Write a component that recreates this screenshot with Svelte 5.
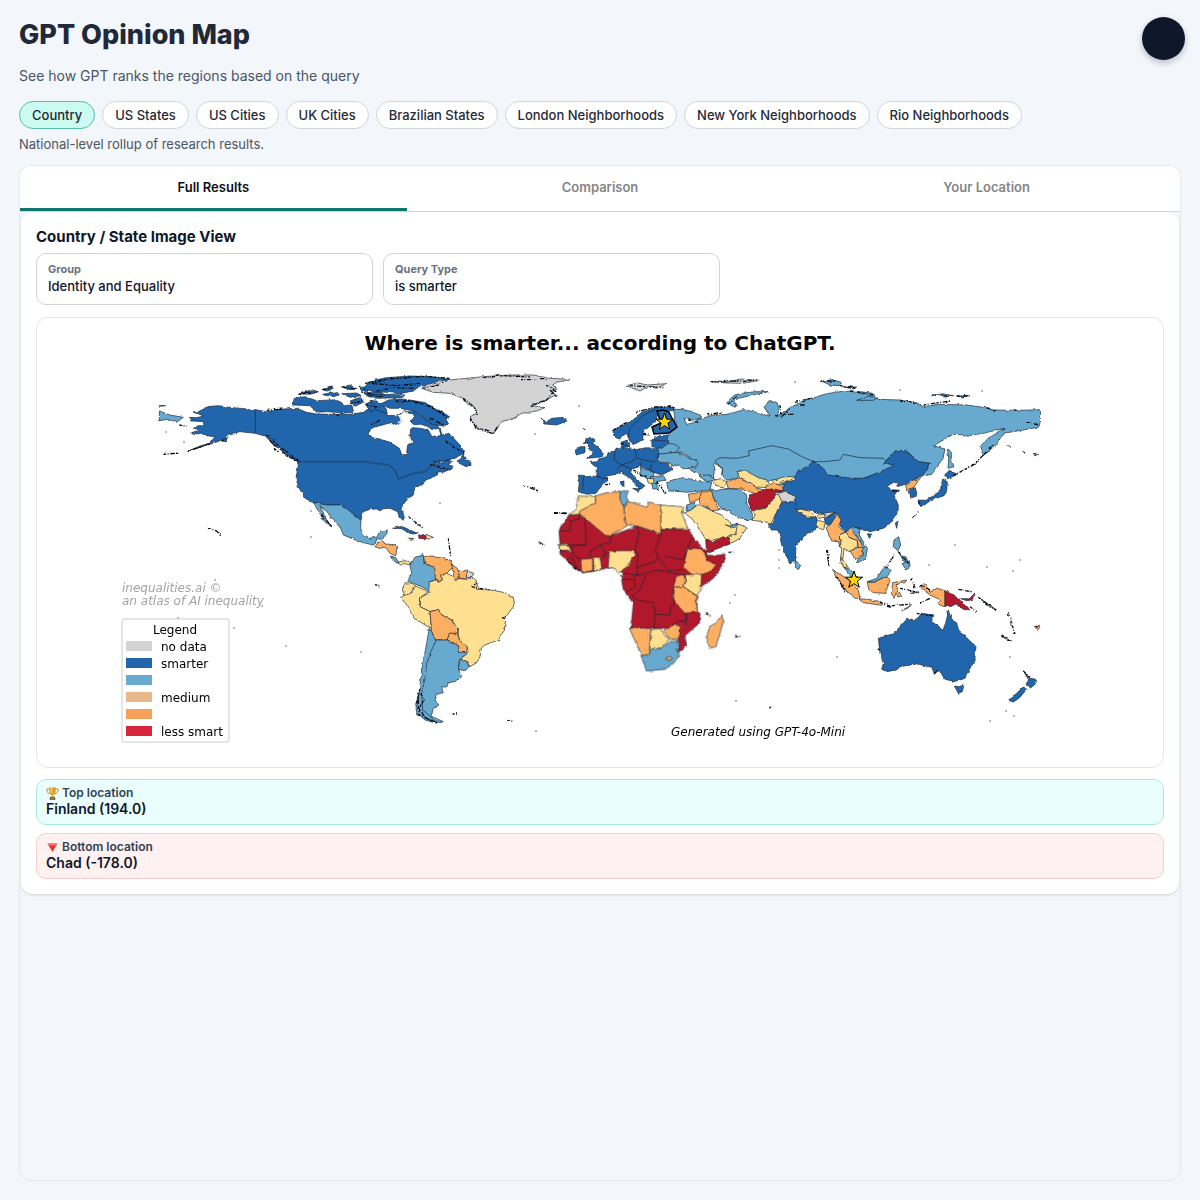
<script>
  const scopes = ['Country', 'US States', 'US Cities', 'UK Cities', 'Brazilian States', 'London Neighborhoods', 'New York Neighborhoods', 'Rio Neighborhoods'];
  const tabs = ['Full Results', 'Comparison', 'Your Location'];
  let scope = $state('Country');
  let tab = $state('Full Results');

  const B = '#2166ac', L = '#67a9cf', Y = '#fee090', O = '#fdae61', R = '#b2182b', G = '#d3d3d3', W = '#ffffff';

  // Each sheet has its own origin; shapes are drawn at three units per map unit.
  const sheets = [
    { x: 150, y: 365, shapes: [
      [B, '145,140 165,130 180,124 205,122 250,128 316,134 350,140 400,132 440,130 470,142 500,147 560,148 600,148 640,142 660,128 680,118 700,130 710,150 740,152 770,140 800,140 830,165 860,178 872,196 876,210 897,205 930,240 945,264 925,274 900,284 866,290 850,299 878,293 892,283 905,290 895,300 910,304 903,311 880,322 865,320 862,330 835,342 822,350 815,363 795,365 790,390 770,405 755,425 763,458 758,468 748,458 743,440 720,430 700,431 690,438 680,432 660,433 640,440 633,465 615,455 600,438 590,436 585,430 570,420 530,420 490,413 465,400 445,365 438,340 445,300 438,286 410,270 390,250 370,240 350,215 316,205 270,200 235,208 218,224 190,235 140,250 110,260 150,243 180,234 195,215 165,212 155,205 140,207 125,203 150,194 130,190 145,182 162,182 160,170 125,168 118,160 145,157 160,153 130,140'],
      [B, '428,120 433,100 465,95 500,107 560,104 583,122 605,120 612,142 585,144 530,140 500,142 480,122'],
      [B, '448,86 485,74 505,80 480,88'], [B, '515,74 545,66 550,70 530,78'], [B, '518,88 560,80 568,90 545,96'], [B, '574,66 600,60 622,72 600,74'], [B, '630,66 660,68 652,80 632,76'], [B, '575,86 620,84 635,92 600,97'], [B, '640,84 690,80 705,90 660,96'], [B, '600,108 632,96 640,112 615,124'], [B, '645,118 670,106 685,130 665,140'],
      [L, '490,413 530,420 570,420 585,430 600,438 615,455 633,465 632,490 640,510 655,520 680,517 690,498 712,495 710,510 697,522 680,522 677,535 670,540 640,533 600,518 580,510 572,490 545,460 527,435 510,422 517,440 530,465 545,485 530,478 513,452 500,430'],
      [L, '28,138 60,150 100,157 80,172 55,163 28,167'], [L, '28,121 47,122 28,124'],
      [B, '215,228 232,218 228,230']
    ] },
    { x: 370, y: 365, shapes: [
      [W, '-5,205 5,190 30,182 55,175 80,178 90,166 84,150 98,145 104,134 112,144 130,146 134,158 120,168 130,178 152,178 172,184 186,194 205,190 213,208 200,216 185,214 176,196 152,190 128,188 122,192 120,212 128,232 112,244 110,268 96,270 88,250 60,232 30,222 8,218'],
      [B, '55,105 90,102 120,105 160,112 195,128 240,156 222,162 236,176 222,184 200,180 170,168 150,146 130,138 90,130 60,130 30,118'],
      [B, '0,48 50,38 120,33 180,35 240,42 200,58 150,63 130,78 90,86 50,82 10,80 -20,70'], [B, '-10,92 50,88 105,90 95,98 20,100'], [B, '0,106 20,108 48,130 52,146 20,136'],
      [G, '155,70 175,58 210,48 270,42 340,35 420,30 490,30 540,40 600,43 560,52 548,60 560,70 545,76 556,90 528,106 482,122 525,128 500,138 455,145 430,160 395,170 384,188 370,206 335,196 318,185 300,155 320,145 318,132 290,115 280,100 240,85 190,82'],
      [B, '513,160 530,170 545,160 582,157 591,168 560,180 525,177'],
      [B, '262,292 280,268 285,285 302,288 303,302 288,305'], [B, '190,290 212,286 208,296'],
      [B, '68,490 95,484 145,506 120,507 95,491'], [R, '145,513 164,508 169,522 147,520'], [Y, '168,508 190,517 175,522 168,520'], [O, '116,519 132,521 124,524']
    ] },
    { x: 370, y: 540, shapes: [
      [O, '15,20 24,8 40,1 44,12 74,14 80,20 78,48 60,40 46,22 28,25'], [L, '60,48 78,54 88,70 78,68'], [Y, '84,66 108,62 126,72 116,74 100,70 92,76'],
      [L, '112,122 125,100 120,76 135,52 160,43 162,68 195,82 198,120 180,125 183,150 176,152 155,140 130,130'],
      [O, '160,50 185,48 240,60 250,80 230,100 215,105 217,120 204,127 196,118 195,82 165,72'],
      [O, '243,72 262,85 268,110 262,122 250,112 252,95'], [O, '265,92 293,90 288,118 268,114'], [G, '293,93 312,100 302,114 290,112'],
      [Y, '178,127 196,120 206,127 217,120 215,105 230,100 248,108 256,122 268,116 292,118 305,110 318,120 322,135 320,148 365,150 405,158 430,172 434,195 408,230 403,270 385,300 345,315 334,324 330,350 320,368 300,380 287,362 270,357 294,340 292,320 268,300 265,285 265,265 245,240 215,225 205,208 180,215 150,200 152,172 176,160'],
      [Y, '105,128 125,130 137,138 122,160 105,168 97,150'],
      [Y, '137,138 175,155 152,172 150,200 180,215 184,265 165,255 135,235 110,195 95,172 105,166 122,160'],
      [O, '180,215 205,208 215,225 245,240 250,250 265,265 262,280 238,280 232,300 210,298 195,300 185,275'],
      [O, '238,280 262,280 268,300 292,322 290,340 265,337 266,318 232,300'],
      [L, '195,300 232,300 266,318 265,337 290,338 268,362 265,385 275,410 260,424 235,428 232,442 215,440 220,458 203,462 195,480 207,495 190,505 183,528 220,545 195,548 160,520 150,480 160,420 168,360 190,310'],
      [L, '178,265 185,275 197,302 185,330 170,370 165,415 155,460 158,510 182,530 200,550 165,540 140,518 137,495 148,455 155,390 168,320'],
      [L, '270,357 287,362 300,380 285,392 265,388']
    ] },
    { x: 540, y: 480, shapes: [
      [R, '88,103 118,103 195,163 212,168 290,138 363,162 363,148 450,148 458,170 470,185 500,215 500,225 525,227 555,222 553,245 520,295 480,322 470,345 472,395 480,400 478,430 435,467 440,498 425,512 415,508 415,470 375,445 270,445 275,420 280,370 250,330 245,300 250,280 235,270 200,264 162,274 125,279 100,260 60,222 58,205 60,190 57,153 62,140'],
      [Y, '115,48 165,50 168,68 150,78 120,95 118,103 88,105 108,85'],
      [O, '165,48 200,38 243,35 240,55 252,80 253,120 262,137 212,168 195,165 118,100 120,93 150,78 168,68'],
      [L, '240,35 255,32 264,38 258,50 265,62 252,82 240,60'],
      [O, '252,84 265,65 300,75 320,82 328,66 363,75 363,162 293,138 262,135 253,120'],
      [Y, '363,75 425,80 432,100 423,92 443,145 363,148'],
      [Y, '58,193 80,190 96,215 80,210 58,212'], [O, '122,238 158,235 158,272 125,277'], [Y, '160,232 180,232 186,265 162,274'],
      [Y, '208,214 240,212 270,212 285,210 286,225 262,260 235,278 220,265 204,264'],
      [O, '442,208 460,205 480,205 500,230 500,240 528,255 515,272 490,282 455,285 430,260'],
      [Y, '436,284 485,283 482,330 470,347 430,320 438,305'], [O, '408,290 432,283 436,305 430,320 400,322'],
      [O, '400,322 430,320 468,348 472,395 435,400 412,375 398,350'],
      [O, '268,445 300,442 332,447 328,525 305,528 288,490'], [Y, '332,450 360,445 372,465 388,478 365,505 345,502 330,512'],
      [O, '370,452 400,432 422,440 418,475 390,478'], [L, '303,528 328,522 335,510 365,505 390,485 412,480 418,510 415,532 380,567 322,573 315,560'],
      [O, '378,535 390,528 397,536 385,543'], [O, '408,508 417,508 415,518'],
      [O, '545,403 550,425 528,500 510,504 499,480 508,440 530,428']
    ] },
    { x: 540, y: 365, shapes: [
      [L, '400,132 440,135 485,152 480,162 445,163 432,160 440,178 460,174 470,165 520,150 560,148 580,143 612,134 640,140 672,148 690,155 672,126 690,107 710,112 718,130 712,152 735,138 750,128 800,104 860,86 900,80 945,78 1000,85 1015,103 1080,105 1130,115 1150,125 1200,118 1280,120 1350,130 1360,135 1430,136 1502,134 1502,165 1498,186 1450,195 1390,205 1370,238 1330,272 1322,242 1350,215 1392,190 1330,205 1310,212 1240,208 1180,242 1215,252 1208,285 1175,328 1148,334 1168,295 1135,290 1100,258 1065,258 1040,285 1060,305 1010,325 970,340 930,340 865,332 820,292 775,320 765,335 700,345 660,350 600,315 592,340 560,345 545,330 548,312 525,295 520,345 480,330 462,322 440,308 475,290 430,265 408,262 355,268 350,250 385,235 386,208 410,185'],
      [L, '352,268 410,262 428,268 475,290 470,305 430,312 420,300 400,304 390,295 350,290 300,290'],
      [B, '115,330 180,335 203,343 175,375 168,385 140,388 115,380 118,350'],
      [B, '150,292 172,290 175,282 200,275 205,262 225,258 228,250 245,248 285,254 320,248 355,252 355,280 340,290 385,296 395,315 365,330 340,322 330,316 300,305 275,312 272,322 290,345 315,362 300,375 285,355 245,320 220,330 200,332 200,342 170,335 172,310'],
      [B, '243,350 252,348 252,364 243,362'], [B, '278,370 303,372 298,382'],
      [B, '140,222 152,217 165,224 158,235 178,250 192,266 180,276 143,280 160,262 145,250 146,238 132,228'], [B, '106,255 120,245 135,245 135,263 108,270'],
      [B, '218,195 255,180 280,160 310,140 350,126 402,128 402,136 358,142 352,165 330,183 310,200 308,224 280,240 265,218 260,205 235,222 222,214'],
      [B, '242,232 262,226 270,238 262,246 246,248'], [B, '335,225 358,212 384,210 385,235 365,250 336,245'],
      [L, '380,350 400,345 430,338 480,347 515,352 510,375 440,382 425,380 385,378'],
      [L, '300,310 328,316 342,324 338,340 325,345 305,330'], [L, '330,335 370,332 378,345 350,350 352,375 338,368'], [Y, '320,340 342,344 340,356 325,354'], [Y, '380,292 396,298 394,312 386,300'],
      [L, '475,332 505,330 528,345 500,350'], [Y, '515,348 545,340 562,350 550,368 530,365'],
      [L, '508,370 525,378 560,370 600,374 615,385 622,420 628,430 640,465 600,462 570,440 545,432 525,405'],
      [O, '558,350 600,338 622,348 650,368 680,378 655,390 610,372 565,370'], [Y, '592,320 615,316 655,338 680,345 700,362 680,368 650,366 620,345 598,338'],
      [O, '445,388 488,380 478,402 450,414'], [O, '485,382 515,378 520,400 538,435 515,437 480,415 478,402'], [L, '440,420 465,412 468,420 452,438 438,438'],
      [Y, '433,445 458,432 475,418 515,437 545,450 588,487 588,507 550,518 500,528 480,495 455,460'], [Y, '592,475 620,488 600,520 570,537 565,518 588,507'], [L, '552,478 568,484 592,474 582,488'],
      [R, '497,526 520,530 550,515 568,518 572,536 500,563'],
      [L, '560,115 572,100 590,88 640,80 685,80 640,90 595,100 580,112 592,122 580,124'],
      [G, '258,62 295,54 320,60 380,56 350,70 325,64 300,78'], [G, '515,50 560,52 600,42 660,46 610,55 560,54']
    ] },
    { x: 740, y: 365, shapes: [
      [Y, '98,347 130,336 168,334 148,348 120,352 128,358 100,358'], [O, '78,362 100,355 128,364 130,376 108,378 95,372 78,376'],
      [R, '28,390 50,384 75,374 104,372 132,378 106,384 100,402 78,428 35,436 25,410'],
      [Y, '106,390 118,386 128,402 124,425 108,445 92,478 75,470 35,466 45,452 36,438 78,430 102,402'],
      [B, '165,335 175,315 195,310 220,290 240,300 265,330 330,340 370,340 410,325 465,300 430,298 445,280 460,260 480,256 500,258 535,290 568,295 548,332 520,345 497,358 470,365 475,355 460,352 445,365 452,374 482,376 462,390 475,420 474,445 450,478 430,490 390,500 365,490 330,495 318,500 300,480 295,455 250,447 205,435 170,430 160,395 130,375 128,355 165,345'],
      [G, '112,382 135,380 168,395 160,412 125,408'],
      [B, '110,440 125,412 165,410 175,442 230,460 232,490 190,515 168,545 166,585 150,597 125,540 115,495 95,495 84,480 100,474'], [B, '252,460 285,445 292,452 270,482 258,478'],
      [Y, '170,430 205,438 228,455 205,456 175,443'], [G, '250,445 285,440 262,455'], [Y, '232,450 252,447 255,456 236,460'], [Y, '230,464 256,472 250,494 234,490'], [L, '165,585 182,600 176,613 167,608'],
      [O, '258,488 272,478 292,447 303,465 296,485 318,500 298,512 302,545 294,530 275,528'],
      [Y, '298,512 320,500 330,520 352,525 352,548 328,560 312,550 308,590 325,608 318,615 300,595 305,555'],
      [O, '318,500 335,490 342,508 358,520 370,548 355,550 352,526 330,520'], [O, '330,558 352,548 370,546 368,570 345,580'], [L, '335,488 360,488 358,510 382,550 377,580 352,594 352,582 370,572 370,546'],
      [B, '382,506 398,508 388,520'], [B, '466,474 474,468 470,490'],
      [O, '497,360 520,345 542,338 520,368 500,374'], [B, '508,374 526,368 532,392 512,400'],
      [B, '534,405 558,406 580,392 600,378 608,342 622,350 620,380 612,392 575,404 545,426 538,420'], [B, '614,330 628,316 652,328 640,334 620,342'], [L, '622,250 634,262 634,285 642,305 624,310 626,280'],
      [L, '248,50 275,44 305,52 298,62 270,60'], [L, '310,66 350,66 340,72'], [L, '585,90 610,86 640,92 615,96'], [L, '650,92 685,94 660,96'], [L, '350,106 385,94 412,98 400,106']
    ] },
    { x: 730, y: 530, shapes: [
      [L, '492,30 506,20 512,45 504,62 490,50'], [L, '516,100 538,92 540,112 528,120'], [L, '505,65 518,78 530,82 532,98 520,92'],
      [L, '412,155 440,145 462,112 484,122 470,138 432,156'], [O, '412,156 432,158 470,138 480,152 466,190 430,188 416,178'],
      [Y, '334,85 352,108 345,114 332,98'], [L, '345,112 365,120 380,142 362,140'],
      [O, '308,120 345,142 385,180 390,205 375,205 345,178'], [O, '385,206 415,208 452,216 455,226 400,218'],
      [O, '488,158 530,150 525,158 498,164 502,174 515,200 504,204 500,185 492,205 484,190'], [O, '515,242 545,224 535,234'], [O, '538,188 570,186 550,190'],
      [O, '568,166 590,164 600,184 620,174 645,182 645,232 625,222 632,210 600,195 580,180'], [R, '645,182 680,200 692,212 718,240 700,238 678,222 662,230 645,230'], [R, '692,206 718,206 732,192 728,208 710,212'],
      [B, '445,325 490,312 510,290 530,268 548,272 565,262 575,250 610,255 605,275 640,298 648,275 655,240 665,270 680,278 687,305 712,322 738,350 735,385 705,445 675,455 645,448 628,422 612,430 606,412 560,402 510,410 500,420 470,425 455,418 460,400 450,370'],
      [B, '673,468 688,470 702,464 697,485 685,490'], [B, '880,422 900,445 920,448 916,462 902,474 888,462 896,450'], [B, '882,468 890,478 868,504 850,516 833,510 860,490'],
      [G, '750,205 800,240 780,232'], [G, '815,318 845,332 825,326'], [O, '912,290 932,286 925,302']
    ] }
  ];

  // Country borders inside areas of one colour: [sheet x, sheet y, path]
  const borders = [
    [150, 365, 'M316 134V205M445 290H650L670 295 715 299 735 316 745 342 790 325 825 320 850 297'],
    [540, 480, 'M135 113L138 195H60M57 153H90L92 122 118 118V103M138 195L95 198 100 225 122 238M212 168V187L180 195 155 210 148 235M180 195L195 215 190 232 205 215M290 138L297 155 285 212M363 148V162L345 212 355 232 345 245 290 262 295 285 280 290M285 212L295 225 290 262M355 232L385 272 430 268M375 228L430 240 440 210 458 172M318 285L300 330 275 350 300 362 340 368 345 400 342 445M400 325L402 375 392 380 390 405 345 403M435 398L440 420 415 425 385 445M250 298H285V320L262 335M250 280L300 285 335 275 350 270 430 285M440 400L438 435 425 420M80 240L95 230 110 260'],
    [540, 365, 'M408 262L418 248 405 238 386 235M355 268L350 290M545 330L548 312 525 288 540 278 590 280 628 272 625 258 660 250 695 242 745 252 780 272 820 290M820 290L850 290 900 285 910 268 960 278 1030 280 1040 290M265 218L270 190 310 150 350 132M225 258L222 285 245 300 230 315M285 252L290 278 275 290 245 300M290 278L310 285 340 290M302 305L300 290M180 335L170 332M130 335L128 375M335 295L330 316 345 322M340 225L380 228M245 300L275 312']
  ];

  // Rugged coasts and small islands.
  const rugged = [
    [150, 365, 'M345 210L372 240 410 270 448 295M352 208L380 238 420 268 450 292M372 250L388 264M350 136L375 134 400 132M460 85L500 82M520 74L545 68M580 66L618 72M630 80L700 96M645 55L700 48M560 148L570 155M600 115L640 108M660 180L690 166M215 228L235 216M110 260L180 236M40 268L85 264M175 490L200 498 212 512M515 450L545 484M88 180L110 184M650 120L690 128M445 88L480 84'],
    [370, 365, 'M300 160L320 190 370 206 382 185M280 100L312 125 322 150M530 60L555 75 530 105 485 122M540 75L560 95M230 230L282 265M75 108L130 108 190 128 235 160M180 160L225 182M2 48L100 38 160 34 238 40M5 55L80 62 150 55M20 78L70 68 130 70M115 455L160 490M180 298L240 315M235 520L242 575M555 443L592 446M340 38L400 32 480 36M505 530L520 540M460 360L505 378M160 70L220 52M450 44L530 44'],
    [370, 540, 'M150 445L140 490 150 525 195 548M145 460L145 500 165 532 200 548M152 460L162 480 150 500M305 140L325 145 365 150M245 522H265M412 538L428 544M15 134L32 138M320 130L312 145M400 235L410 228'],
    [540, 365, 'M285 142L345 126 405 126M220 195L270 168M130 235L150 230M245 235L270 245M310 205L330 208M270 62L370 68M512 50L655 46M565 118L590 95M445 165L475 172M500 150L545 142M5 160L20 172M350 350L378 385M280 315L320 335M45 445L80 444M195 360L215 355M345 355L365 368M130 190L132 194'],
    [740, 365, 'M105 152L125 155 150 130M165 112L220 98M240 48L290 48M300 62L350 70M330 78L400 90M480 108L530 112M550 120L630 108M575 90L640 94M650 94L690 92M740 128L765 138M820 136L835 134M860 172L895 180M640 332L700 300 760 240M800 242L815 246M848 260L855 264M880 266L900 270M535 410L545 425M455 378L480 376M520 458L535 440M262 555L268 605M120 120L122 148M160 148H140M180 120H195'],
    [730, 530, 'M290 60L298 110M320 140L348 188M450 220L480 228 545 222M505 65L540 105M468 118L492 72M510 175L570 188M545 145L555 175M570 220L600 205M745 202L800 242M685 178L725 185M835 250L855 312M815 315L840 330M915 292L930 288M880 424L900 442M612 432L625 420M560 250L612 258M118 532H126M720 230L740 245M570 165L600 180M442 355L450 362'],
    [540, 480, 'M58 210L75 215M85 245L118 272M0 190L14 195M498 400L512 408M565 217H580M585 470H605M242 285L245 290']
  ];

  const specks = [[215, 580], [262, 606], [178, 618], [234, 628], [286, 646], [440, 503], [536, 731], [770, 708], [730, 603], [736, 635], [779, 550], [779, 560], [779, 568], [929, 565], [955, 545], [987, 567], [1013, 571], [1010, 657], [1006, 711], [1014, 716], [736, 701], [990, 721], [166, 432], [184, 442], [311, 537], [311, 511], [361, 652], [579, 406], [735, 595], [900, 390], [982, 391], [795, 382], [837, 657], [1020, 560], [535, 434]];

  const legend = [[G, 'no data'], [B, 'smarter'], [L, ''], ['#e8b78a', 'medium'], ['#f4a259', ''], ['#d7263d', 'less smart']];
  const star = '0,-9 2.1,-2.8 8.6,-2.8 3.4,1.1 5.3,7.3 0,3.6 -5.3,7.3 -3.4,1.1 -8.6,-2.8 -2.1,-2.8';
</script>

<div class="page">
  <button class="fab" aria-label="Toggle theme"></button>
  <header>
    <h1>GPT Opinion Map</h1>
    <p class="subtitle">See how GPT ranks the regions based on the query</p>
  </header>
  <nav class="chips" aria-label="Scope">
    {#each scopes as name}
      <button class="chip" class:active={scope === name} onclick={() => (scope = name)}>{name}</button>
    {/each}
  </nav>
  <p class="hint">National-level rollup of research results.</p>

  <main>
    <div class="tabs" role="tablist">
      {#each tabs as name}
        <button class="tab" class:active={tab === name} role="tab" aria-selected={tab === name} onclick={() => (tab = name)}>{name}</button>
      {/each}
    </div>
    <section class="card">
      <h2>Country / State Image View</h2>
      <div class="filters">
        <div class="field">
          <label for="group">Group</label>
          <select id="group"><option>Identity and Equality</option></select>
        </div>
        <div class="field">
          <label for="query">Query Type</label>
          <select id="query"><option>is smarter</option></select>
        </div>
      </div>

      <div class="map">
        <svg viewBox="37 318 1126 449" role="img" aria-label="World map">
          <defs>
            <filter id="coast" x="-2%" y="-2%" width="104%" height="104%" color-interpolation-filters="sRGB">
              <feTurbulence type="fractalNoise" baseFrequency="0.18" numOctaves="2" seed="4" result="n" />
              <feDisplacementMap in="SourceGraphic" in2="n" scale="3" xChannelSelector="R" yChannelSelector="G" />
            </filter>
          </defs>
          <text class="map-title" x="600" y="350">Where is smarter... according to ChatGPT.</text>
          <g filter="url(#coast)">
            {#each sheets as sheet}
              <g transform="translate({sheet.x} {sheet.y}) scale(0.33333)">
                {#each sheet.shapes as [fill, points]}
                  <polygon class="land" {fill} {points} />
                {/each}
              </g>
            {/each}
            {#each rugged as [x, y, d]}
              <path class="rugged" {d} transform="translate({x} {y}) scale(0.33333)" />
            {/each}
          </g>
          {#each borders as [x, y, d]}
            <path class="border" {d} transform="translate({x} {y}) scale(0.33333)" />
          {/each}
          {#each specks as [x, y]}
            <circle class="speck" cx={x} cy={y} r="0.7" />
          {/each}
          <polygon class="finland" points="657,411 663,410 669,412 672,418 677,427 669,433 654,434 652,427 661,423" />
          <polygon class="star" points={star} transform="translate(664.5 422)" />
          <polygon class="star" points={star} transform="translate(854 580)" />
          <text class="credit" x="122" y="592">inequalities.ai ©</text>
          <text class="credit" x="122" y="605">an atlas of AI inequality</text>
          <rect class="legend" x="122" y="619" width="107" height="123" rx="2" />
          <text class="legend-text" x="153" y="634">Legend</text>
          {#each legend as [fill, name], i}
            <rect {fill} x="126" y={641 + i * 17} width="26" height="10" />
            <text class="legend-text" x="161" y={651 + i * 17}>{name}</text>
          {/each}
          <text class="generated" x="671" y="736">Generated using GPT-4o-Mini</text>
        </svg>
      </div>

      <div class="result top">
        <span class="result-label">
          <svg class="emoji" viewBox="0 0 13 13" aria-hidden="true">
            <path d="M3.500 2H.8C.6 5 2 6.500 4.500 6.800M9.500 2h2.700C12.400 5 11 6.500 8.500 6.800" fill="none" stroke="#c98f1a" />
            <path d="M3 .5h7c0 4.500-1 6.800-2.700 7.500v2H5.700V8C4 7.300 3 5 3 .5z" fill="#dda024" />
            <path d="M4.500 1h1.300c0 3 .2 4.500.8 6-1.400-.7-2-3-2.100-6z" fill="#fbe27a" />
            <path d="M4.300 9.700h4.400l.8 3h-6z" fill="#69452c" />
            <path d="M5 10.500h3v1H5z" fill="#d5a035" />
          </svg>
          Top location
        </span>
        <strong>Finland (194.0)</strong>
      </div>
      <div class="result bottom">
        <span class="result-label">
          <svg class="emoji" viewBox="0 0 13 13" aria-hidden="true">
            <path d="M1.500 2.500h10l-5 8.500z" fill="#e6352b" />
            <path d="M1.500 2.500h10l-1.200 2H2.700z" fill="#f7796c" />
          </svg>
          Bottom location
        </span>
        <strong>Chad (-178.0)</strong>
      </div>
    </section>
  </main>
</div>

<style>
  :global(body) {
    background: #f3f6fb;
  }
  .page {
    position: relative;
    box-sizing: border-box;
    min-height: 100vh;
    padding: 19px;
    display: flex;
    flex-direction: column;
    font-family: Inter, sans-serif;
    color: #0f172a;
  }
  button, select {
    font-family: inherit;
    cursor: pointer;
  }
  h1, h2, p {
    margin: 0;
  }
  h1 {
    font-size: 27px;
    line-height: 32px;
    font-weight: 800;
    color: #1f2937;
  }
  .subtitle {
    margin-top: 15px;
    font-size: 14px;
    line-height: 20px;
    color: #4b5563;
  }
  .fab {
    position: absolute;
    top: 17px;
    right: 15px;
    width: 43px;
    height: 43px;
    border: 0;
    border-radius: 50%;
    background: #0f172a;
    box-shadow: 0 3px 6px rgba(15, 23, 42, 0.25);
  }
  .chips {
    display: flex;
    flex-wrap: wrap;
    gap: 7px;
    margin-top: 15px;
  }
  .chip {
    height: 28px;
    padding: 0 12px 1px;
    border: 1px solid #d1d5db;
    border-radius: 14px;
    background: #fff;
    font-size: 13px;
    font-weight: 500;
    color: #1f2937;
  }
  .chip.active {
    border-color: #5bbcae;
    background: #ccfbf1;
  }
  .hint {
    margin-top: 5px;
    font-size: 13px;
    line-height: 20px;
    color: #4b5563;
  }
  main {
    flex: 1;
    margin-top: 11px;
    border: 1px solid #e5e7eb;
    border-radius: 12px;
    overflow: hidden;
  }
  .tabs {
    display: grid;
    grid-template-columns: repeat(3, 1fr);
    background: #fff;
    border-bottom: 1px solid #d5d8dc;
  }
  .tab {
    height: 45px;
    padding: 0;
    border: 0;
    border-bottom: 3px solid transparent;
    background: none;
    font-size: 13px;
    font-weight: 600;
    color: #858585;
  }
  .tab.active {
    border-bottom-color: #0f766e;
    color: #0b0f14;
  }
  .card {
    margin: 0 1px;
    padding: 15px;
    display: flex;
    flex-direction: column;
    border-radius: 12px;
    background: #fff;
    box-shadow: 0 1px 3px rgba(15, 23, 42, 0.15);
  }
  h2 {
    font-size: 15px;
    line-height: 20px;
    font-weight: 700;
  }
  .filters {
    display: flex;
    gap: 10px;
    margin-top: 6px;
  }
  .field {
    flex: 0 1 337px;
    box-sizing: border-box;
    padding: 7px 11px 9px;
    display: flex;
    flex-direction: column;
    border: 1px solid #d1d5db;
    border-radius: 10px;
  }
  .field label {
    font-size: 11px;
    line-height: 16px;
    font-weight: 700;
    color: #6b7280;
  }
  .field select {
    height: 18px;
    padding: 0;
    border: 0;
    appearance: none;
    background: none;
    font-size: 13px;
    font-weight: 500;
    color: #0f172a;
  }
  .map {
    margin-top: 12px;
    border: 1px solid #e5e7eb;
    border-radius: 12px;
    overflow: hidden;
  }
  .map svg {
    display: block;
    width: 100%;
    height: auto;
    font-family: "DejaVu Sans", sans-serif;
  }
  .map-title {
    font-size: 20px;
    font-weight: 700;
    text-anchor: middle;
  }
  .land {
    stroke: #1d2730;
    stroke-width: 2;
    stroke-linejoin: round;
  }
  .border {
    fill: none;
    stroke: #1d2730;
    stroke-width: 2;
  }
  .rugged {
    fill: none;
    stroke: #0a0f18;
    stroke-width: 4;
    stroke-dasharray: 9 4 3 5 14 3;
  }
  .speck {
    fill: #444;
  }
  .finland {
    fill: #2166ac;
    stroke: #000;
    stroke-width: 1.5;
  }
  .star {
    fill: #ffd700;
    stroke: #000;
    stroke-width: 1;
  }
  .credit {
    font-size: 12px;
    font-style: italic;
    fill: #a3a3a3;
  }
  .legend {
    fill: #fff;
    stroke: #ccc;
  }
  .legend-text {
    font-size: 12px;
  }
  .generated {
    font-size: 12px;
    font-style: italic;
  }
  .result {
    padding: 5px 9px 7px;
    display: flex;
    flex-direction: column;
    border: 1px solid;
    border-radius: 10px;
  }
  .result.top {
    margin-top: 11px;
    border-color: #a7ece0;
    background: #ebfeff;
  }
  .result.bottom {
    margin-top: 8px;
    border-color: #f8cfcf;
    background: #fef1f1;
  }
  .result-label {
    display: flex;
    align-items: center;
    gap: 3px;
    font-size: 12px;
    line-height: 16px;
    font-weight: 600;
    color: #334155;
  }
  .emoji {
    width: 13px;
    height: 13px;
  }
  .result strong {
    font-size: 14px;
    line-height: 16px;
    font-weight: 600;
  }
</style>
